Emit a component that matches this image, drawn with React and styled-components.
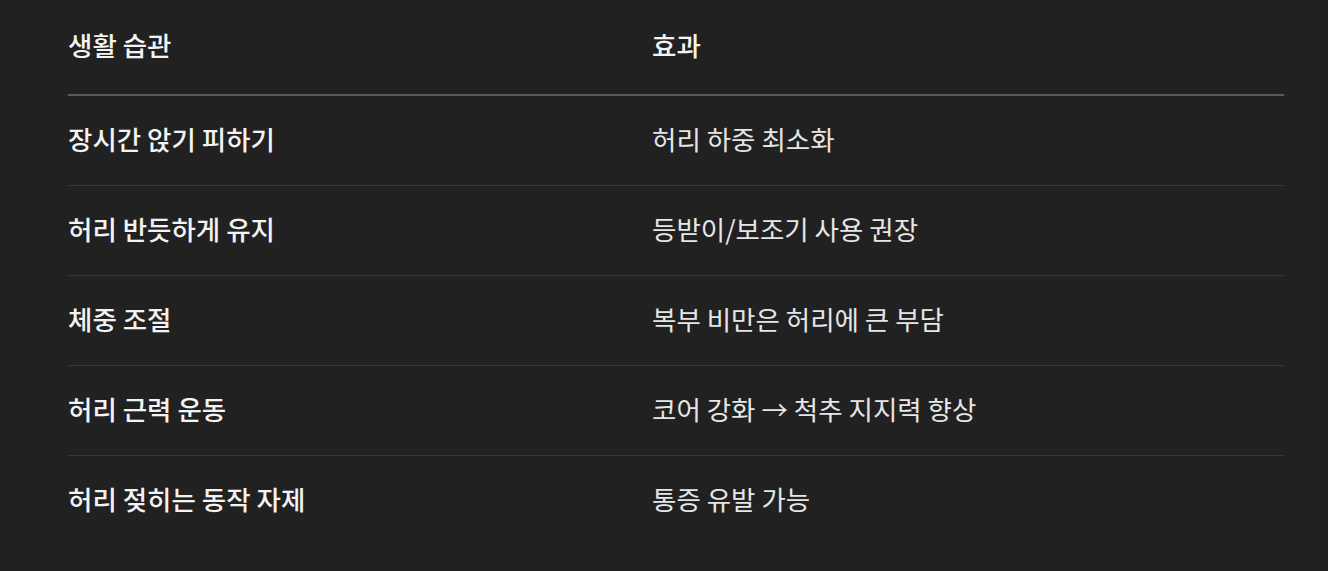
import React from 'react';
import styled, { createGlobalStyle } from 'styled-components';

const GlobalStyle = createGlobalStyle`
    html, body {
        margin: 0;
        padding: 0;
        background-color: #212121;
    }

    body {
        font-family: "Noto Sans CJK KR", "Noto Sans", sans-serif;
        color: #ececec;
    }
`;

const Page = styled.div`
    padding: 0 44px 0 68px;
`;

const Table = styled.div`
    display: grid;
    grid-template-columns: 584px 1fr;
`;

const Cell = styled.div`
    display: flex;
    align-items: center;

    height: ${props => props.head ? '96px' : '90px'};
    padding-bottom: 3px;
    box-sizing: border-box;

    font-size: 26.5px;
    line-height: 1.3;
    font-weight: ${props => props.strong ? 500 : 400};
    color: ${props => props.strong ? '#f3f3f3' : '#e6e6e6'};

    border-bottom: ${props => props.head ? '2px solid #5a5a5a' : props.last ? 'none' : '1px solid #363636'};
`;

const rows = [
    ['장시간 앉기 피하기', '허리 하중 최소화'],
    ['허리 반듯하게 유지', '등받이/보조기 사용 권장'],
    ['체중 조절', '복부 비만은 허리에 큰 부담'],
    ['허리 근력 운동', '코어 강화 → 척추 지지력 향상'],
    ['허리 젖히는 동작 자제', '통증 유발 가능'],
];

const App = () => {
    return (
        <Page>
            <GlobalStyle />
            <Table>
                <Cell head strong>생활 습관</Cell>
                <Cell head strong>효과</Cell>
                {rows.map((row, i) => (
                    <React.Fragment key={row[0]}>
                        <Cell strong last={i === rows.length - 1}>{row[0]}</Cell>
                        <Cell last={i === rows.length - 1}>{row[1]}</Cell>
                    </React.Fragment>
                ))}
            </Table>
        </Page>
    );
};

export default App;
